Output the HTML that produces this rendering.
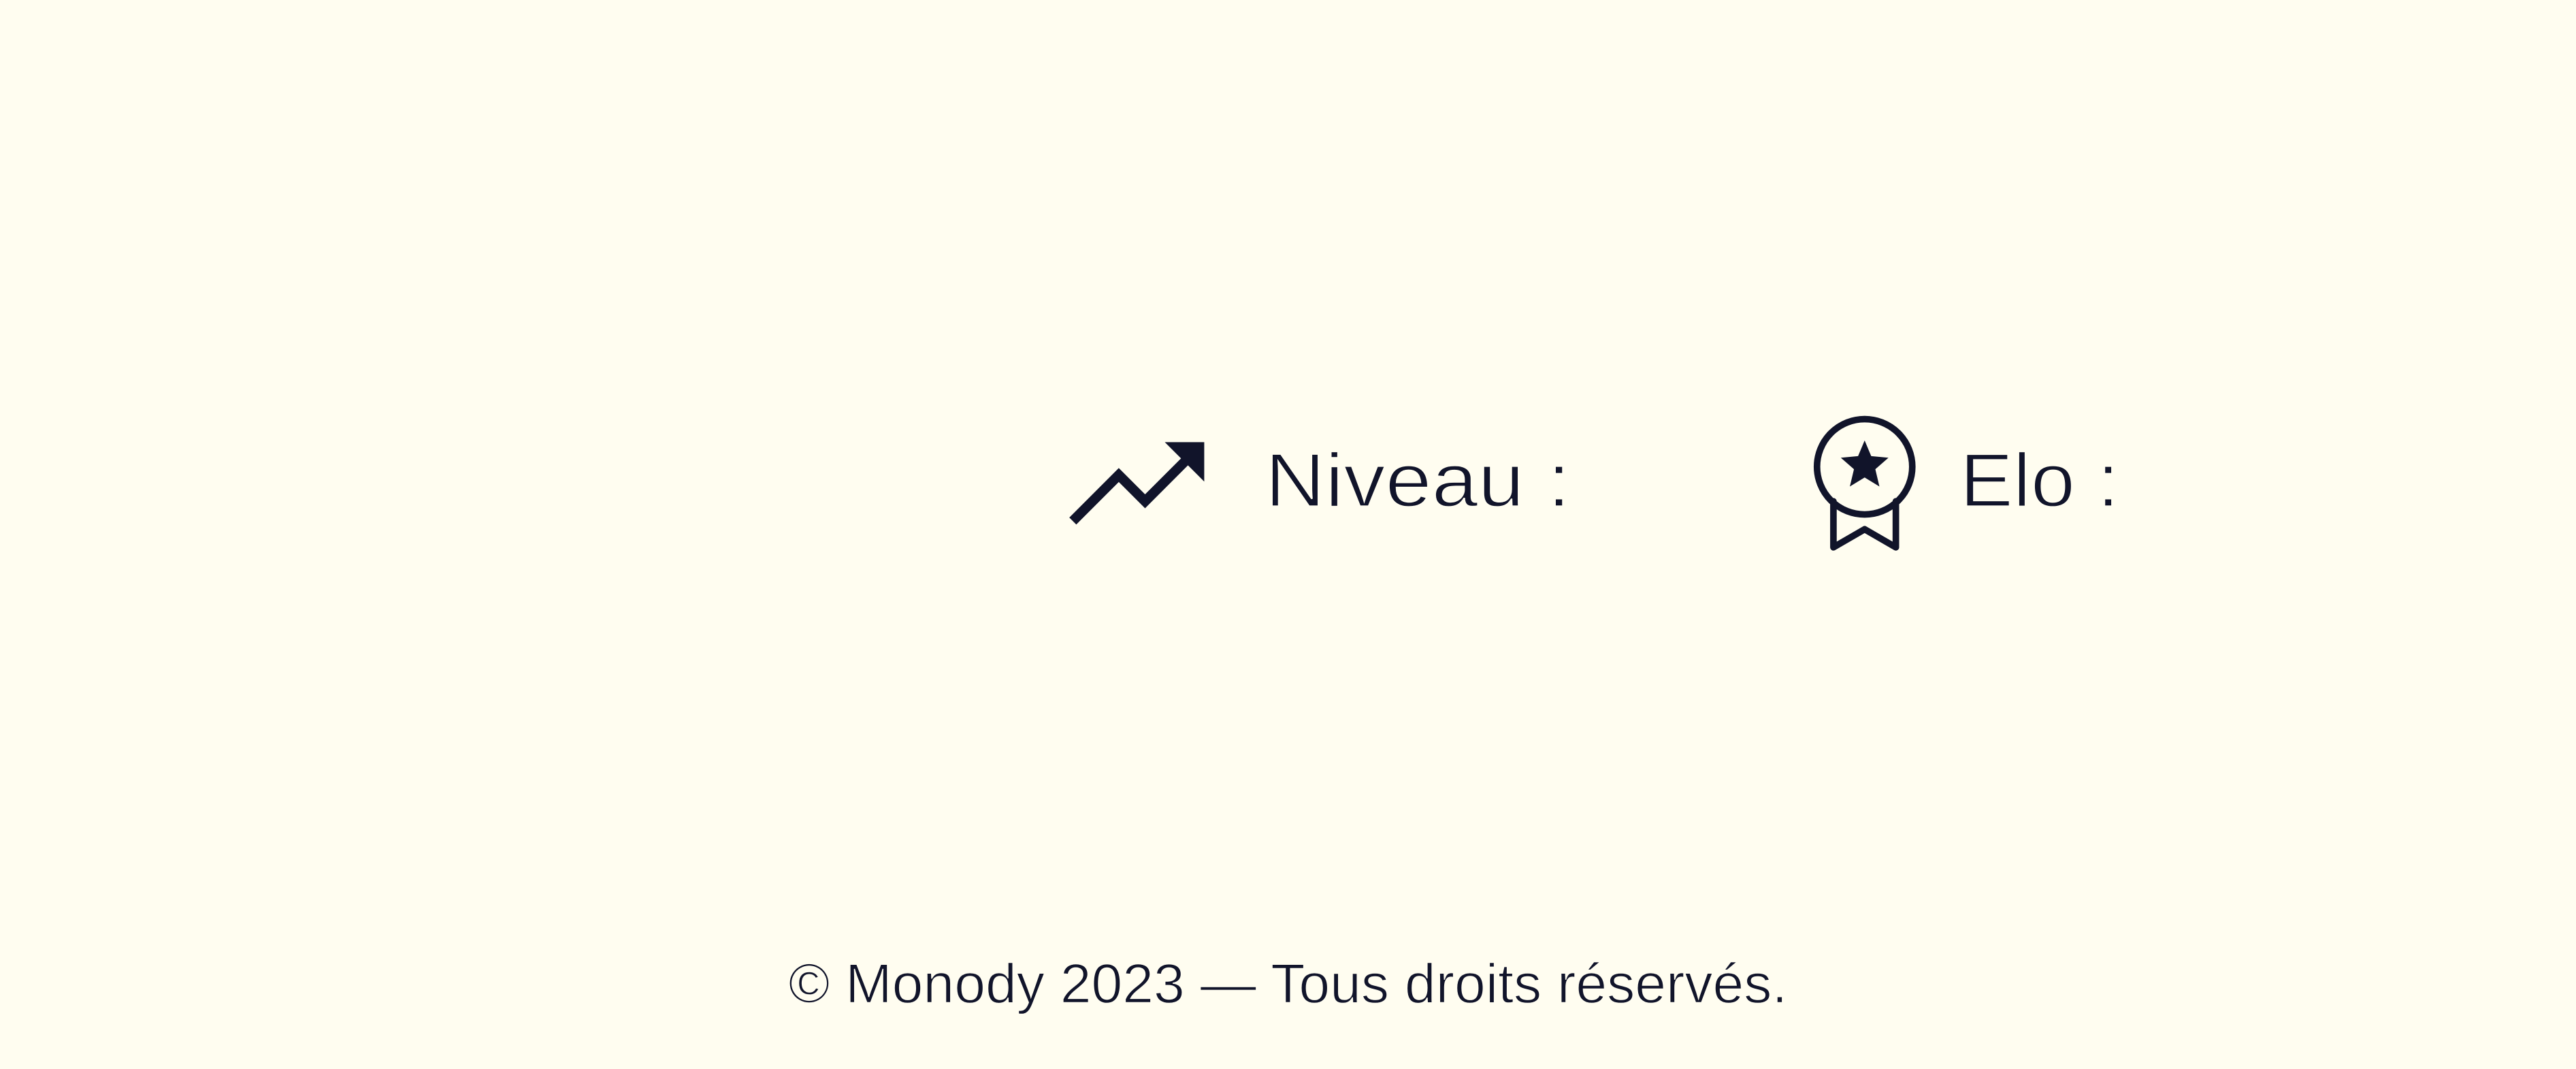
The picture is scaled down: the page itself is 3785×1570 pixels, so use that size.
<!DOCTYPE html>
<html><head><meta charset="utf-8"><style>
html,body{margin:0;padding:0;background:#fffdf0;}
svg{display:block}
</style></head><body>
<svg width="3785" height="1570" viewBox="0 0 1568 650.4" xmlns="http://www.w3.org/2000/svg">
<rect width="1568" height="650.4" fill="#fffdf0"/>
<g fill="none" stroke="#11142a" stroke-width="6">
<polyline points="653,317 681,289 697,305 724,278"/>
</g>
<polygon points="709,269 733,269 733,293" fill="#11142a"/>
<g fill="none" stroke="#11142a" stroke-width="4" stroke-linejoin="round" stroke-linecap="round">
<circle cx="1135" cy="284" r="29"/>
<polyline points="1116,305 1116,333 1135,322 1154,333 1154,305"/>
</g>
<polygon fill="#11142a" points="1135,268 1139,277.5 1149.5,278.5 1141.5,285.5 1144,296 1135,290.5 1126,296 1128.5,285.5 1120.5,278.5 1131,277.5"/>
<g fill="#11142a" stroke="#fffdf0" stroke-width="0.9" font-family="'Liberation Sans', sans-serif">
<text x="770" y="308" font-size="46" textLength="186" lengthAdjust="spacingAndGlyphs">Niveau :</text>
<text x="1193" y="308" font-size="46" textLength="97" lengthAdjust="spacingAndGlyphs">Elo :</text>
<text x="480" y="610" font-size="34" stroke-width="0.6" textLength="608" lengthAdjust="spacingAndGlyphs">© Monody 2023 — Tous droits réservés.</text>
</g>
</svg>
</body></html>
